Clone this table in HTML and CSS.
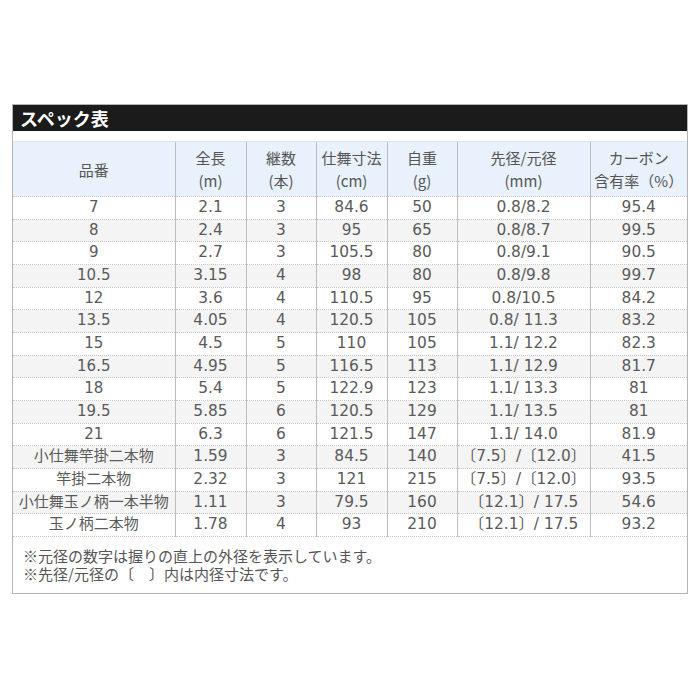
FILE: index.html
```html
<!DOCTYPE html>
<html lang="ja">
<head>
<meta charset="utf-8">
<link rel="stylesheet" href="styles.css">
</head>
<body>
<div class="page">
  <div class="box">
    <div class="title">スペック表</div>
    <table class="spec">
      <colgroup>
        <col class="c1"><col class="c2"><col class="c3"><col class="c4"><col class="c5"><col class="c6"><col class="c7">
      </colgroup>
      <thead>
        <tr>
          <th>品番</th>
          <th>全長<br>(m)</th>
          <th>継数<br>(本)</th>
          <th>仕舞寸法<br>(cm)</th>
          <th>自重<br>(g)</th>
          <th>先径/元径<br>(mm)</th>
          <th>カーボン<br>含有率（%）</th>
        </tr>
      </thead>
      <tbody>
        <tr><td>7</td><td>2.1</td><td>3</td><td>84.6</td><td>50</td><td>0.8/8.2</td><td>95.4</td></tr>
        <tr><td>8</td><td>2.4</td><td>3</td><td>95</td><td>65</td><td>0.8/8.7</td><td>99.5</td></tr>
        <tr><td>9</td><td>2.7</td><td>3</td><td>105.5</td><td>80</td><td>0.8/9.1</td><td>90.5</td></tr>
        <tr><td>10.5</td><td>3.15</td><td>4</td><td>98</td><td>80</td><td>0.8/9.8</td><td>99.7</td></tr>
        <tr><td>12</td><td>3.6</td><td>4</td><td>110.5</td><td>95</td><td>0.8/10.5</td><td>84.2</td></tr>
        <tr><td>13.5</td><td>4.05</td><td>4</td><td>120.5</td><td>105</td><td>0.8/ 11.3</td><td>83.2</td></tr>
        <tr><td>15</td><td>4.5</td><td>5</td><td>110</td><td>105</td><td>1.1/ 12.2</td><td>82.3</td></tr>
        <tr><td>16.5</td><td>4.95</td><td>5</td><td>116.5</td><td>113</td><td>1.1/ 12.9</td><td>81.7</td></tr>
        <tr><td>18</td><td>5.4</td><td>5</td><td>122.9</td><td>123</td><td>1.1/ 13.3</td><td>81</td></tr>
        <tr><td>19.5</td><td>5.85</td><td>6</td><td>120.5</td><td>129</td><td>1.1/ 13.5</td><td>81</td></tr>
        <tr><td>21</td><td>6.3</td><td>6</td><td>121.5</td><td>147</td><td>1.1/ 14.0</td><td>81.9</td></tr>
        <tr><td>小仕舞竿掛二本物</td><td>1.59</td><td>3</td><td>84.5</td><td>140</td><td>〔7.5〕/〔12.0〕</td><td>41.5</td></tr>
        <tr><td>竿掛二本物</td><td>2.32</td><td>3</td><td>121</td><td>215</td><td>〔7.5〕/〔12.0〕</td><td>93.5</td></tr>
        <tr><td>小仕舞玉ノ柄一本半物</td><td>1.11</td><td>3</td><td>79.5</td><td>160</td><td>〔12.1〕/ 17.5</td><td>54.6</td></tr>
        <tr><td>玉ノ柄二本物</td><td>1.78</td><td>4</td><td>93</td><td>210</td><td>〔12.1〕/ 17.5</td><td>93.2</td></tr>
      </tbody>
    </table>
    <div class="notes">
      <p>※元径の数字は握りの直上の外径を表示しています。</p>
      <p>※先径/元径の〔　〕内は内径寸法です。</p>
    </div>
  </div>
</div>
</body>
</html>
```

FILE: styles.css
```css
html, body {
  margin: 0;
  padding: 0;
  background: #ffffff;
}

.page {
  padding: 104px 12px 0 12px;
}

.box {
  width: 676px;
  box-sizing: border-box;
  border: 1px solid #b4b4b4;
  background: #ffffff;
  font-family: "DejaVu Sans", "Noto Sans CJK JP", sans-serif;
  color: #5a5a5a;
}

.title {
  background: #1b1b1b;
  color: #ffffff;
  font-family: "Noto Sans CJK JP", sans-serif;
  font-weight: 700;
  font-size: 18px;
  line-height: 26px;
  height: 26px;
  padding-left: 7px;
  margin-bottom: 10px;
}

.spec {
  width: 674px;
  border-collapse: collapse;
  table-layout: fixed;
}

.c1 { width: 162px; }
.c2 { width: 71px; }
.c3 { width: 70px; }
.c4 { width: 71px; }
.c5 { width: 70px; }
.c6 { width: 133px; }
.c7 { width: 97px; }

.spec th {
  background: #e8f1fc;
  font-family: "Noto Sans CJK JP", sans-serif;
  font-weight: 400;
  font-size: 15px;
  line-height: 23px;
  height: 54px;
  padding: 0;
  color: #555555;
  text-align: center;
  border-left: 1px solid #bdbdbd;
  border-top: 1px solid #dde6f0;
  border-bottom: 1px dotted #c8c8c8;
}

.spec td {
  font-size: 15.4px;
  line-height: 21.67px;
  height: 21.67px;
  padding: 0;
  text-align: center;
  white-space: nowrap;
  border-left: 1px solid #bdbdbd;
  border-bottom: 1px dotted #c8c8c8;
}

.spec td:first-child,
.spec th:first-child {
  border-left: none;
}

.spec td:first-child {
  font-size: 15px;
}

.spec tbody tr:nth-child(even) td {
  background: #f4f4f4;
}

.notes {
  padding: 10px 0 10px 10px;
  font-family: "Noto Sans CJK JP", sans-serif;
  font-size: 15px;
  line-height: 18px;
  color: #555555;
}

.notes p {
  margin: 0;
}
```
